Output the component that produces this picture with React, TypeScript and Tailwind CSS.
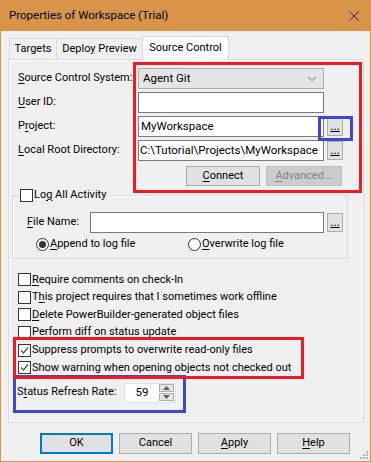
import { ChevronDown, X } from "lucide-react";
import type { ReactNode } from "react";

const font = "font-['Segoe_UI',Roboto,sans-serif]";

function U({ children }: { children: ReactNode }) {
  return <span className="underline underline-offset-2">{children}</span>;
}

function Check({ checked }: { checked?: boolean }) {
  return (
    <div className="flex h-[13px] w-[13px] shrink-0 items-center justify-center border border-[#333] bg-white">
      {checked && (
        <svg width="11" height="11" viewBox="0 0 11 11">
          <polyline points="2,5.5 4.5,8 9,2.5" fill="none" stroke="#555" strokeWidth="1.3" />
        </svg>
      )}
    </div>
  );
}

function Radio({ checked }: { checked?: boolean }) {
  return (
    <div className="flex h-[13px] w-[13px] shrink-0 items-center justify-center rounded-full border border-[#333] bg-white">
      {checked && <div className="h-[7px] w-[7px] rounded-full bg-[#333]" />}
    </div>
  );
}

function Dots() {
  return (
    <button className="ml-[3px] flex h-[19px] w-[16px] items-end justify-center border border-[#adadad] bg-[#e1e1e1] pb-[3px] text-[12px] leading-none">
      <span className="underline">...</span>
    </button>
  );
}

function Btn({ children, primary }: { children: ReactNode; primary?: boolean }) {
  return (
    <button
      className={
        primary
          ? "h-[21px] w-[73px] border-2 border-[#0078d7] bg-[#e1e1e1]"
          : "h-[21px] w-[73px] border border-[#adadad] bg-[#e1e1e1]"
      }
    >
      {children}
    </button>
  );
}

function Row({ label, children }: { label: ReactNode; children: ReactNode }) {
  return (
    <div className="flex h-[21px] items-center">
      <div className="w-[129px] pl-[9px]">{label}</div>
      {children}
    </div>
  );
}

function Option({ checked, children }: { checked?: boolean; children: ReactNode }) {
  return (
    <div className="flex h-[17.6px] items-center gap-[1px] pl-[9px]">
      <Check checked={checked} />
      <span>{children}</span>
    </div>
  );
}

export default function App() {
  return (
    <div className={`relative flex h-[462px] w-[371px] flex-col whitespace-nowrap border border-t-0 border-[#d8954a] bg-[#f0f0f0] text-[11px] text-black ${font}`}>
      <div className="-mx-px flex h-[31px] items-center justify-between bg-[#d8954a] pl-[9px] pr-[8px]">
        <span className="text-[11.5px]">Properties of Workspace (Trial)</span>
        <X size={18} strokeWidth={1} />
      </div>

      <div className="px-[7px] pt-[5px]">
        <div className="flex h-[23px] items-end pl-[1px]">
          <div className="flex h-[21px] w-[48px] items-center justify-center border border-b-0 border-[#d9d9d9]">Targets</div>
          <div className="flex h-[21px] w-[86px] items-center justify-center border border-b-0 border-l-0 border-[#d9d9d9]">Deploy Preview</div>
          <div className="relative z-10 -mb-px -ml-px flex h-[24px] w-[87px] items-center justify-center border border-b-0 border-[#d9d9d9] bg-white">
            Source Control
          </div>
        </div>

        <div className="h-[364px] w-[356px] border border-[#d9d9d9] shadow-[inset_1px_1px_0_#fff,inset_-1px_-1px_0_#fff]">
          <div className="flex flex-col gap-[3px] pt-[8px]">
            <Row label={<><U>S</U>ource Control System:</>}>
              <div className="flex h-[21px] w-[186px] items-center justify-between border border-[#adadad] bg-[#e5e5e5] pl-[4px] pr-[4px] text-[11.5px]">
                <span>Agent Git</span>
                <ChevronDown size={14} strokeWidth={1.3} className="text-[#444]" />
              </div>
            </Row>
            <Row label={<><U>U</U>ser ID:</>}>
              <div className="h-[21px] w-[186px] border border-[#7a7a7a] bg-white" />
            </Row>
            <Row label={<>P<U>r</U>oject:</>}>
              <div className="flex h-[21px] w-[186px] items-center border border-[#7a7a7a] bg-white pl-[2px] text-[11.5px]">MyWorkspace</div>
              <Dots />
            </Row>
            <Row label={<><U>L</U>ocal Root Directory:</>}>
              <div className="flex h-[21px] w-[186px] items-center overflow-hidden border border-[#7a7a7a] bg-white pl-[1px] text-[11.5px]">C:\Tutorial\Projects\MyWorkspace</div>
              <Dots />
            </Row>
          </div>

          <div className="mt-[5px] flex gap-[6px] pl-[177px]">
            <button className="h-[20px] w-[74px] border border-[#adadad] bg-[#e1e1e1]">
              <U>C</U>onnect
            </button>
            <button className="h-[20px] w-[76px] border border-[#bfbfbf] bg-[#cccccc] text-[#838383]">
              <U>A</U>dvanced...
            </button>
          </div>

          <div className="mt-[3px] ml-[3px] w-[336px]">
            <div className="relative z-10 flex h-[12px] items-center pl-[8px]">
              <div className="flex items-center gap-[1px] bg-[#f0f0f0] pr-[4px]">
                <Check />
                <span>Lo<U>g</U> All Activity</span>
              </div>
            </div>
            <div className="-mt-[6px] h-[64px] border border-[#dcdcdc] shadow-[inset_1px_1px_0_#fff]">
              <div className="mt-[16px] flex h-[21px] items-center">
                <span className="w-[77px] pl-[14px]"><U>F</U>ile Name:</span>
                <div className="h-[21px] w-[234px] border border-[#7a7a7a] bg-white" />
                <Dots />
              </div>
              <div className="mt-[3px] flex h-[17px] items-center pl-[23px]">
                <Radio checked />
                <span className="w-[139px] pl-[1px]"><U>A</U>ppend to log file</span>
                <Radio />
                <span className="pl-[1px]"><U>O</U>verwrite log file</span>
              </div>
            </div>
          </div>

          <div className="mt-[12px]">
            <Option><U>R</U>equire comments on check-In</Option>
            <Option>T<U>h</U>is project requires that I sometimes work offline</Option>
            <Option><U>D</U>elete PowerBuilder-generated object files</Option>
            <Option><U>P</U>erform diff on status update</Option>
            <Option checked>Suppress prompts to overwrite read-only files</Option>
            <Option checked>Show warning when opening objects not checked out</Option>
          </div>

          <div className="mt-[6px] flex h-[20px] items-center pl-[8px]">
            <span className="w-[107px]">S<U>t</U>atus Refresh Rate:</span>
            <div className="flex h-[20px] w-[52px] items-center border border-[#e3e3e3] bg-white">
              <span className="w-[34px] text-center text-[11.5px]">59</span>
              <div className="flex flex-col gap-px">
                <div className="flex h-[8px] w-[15px] items-center justify-center border border-[#adadad] bg-[#e5e5e5]">
                  <svg width="7" height="4" viewBox="0 0 7 4"><polygon points="0,4 7,4 3.5,0" fill="#606060" /></svg>
                </div>
                <div className="flex h-[8px] w-[15px] items-center justify-center border border-[#adadad] bg-[#e5e5e5]">
                  <svg width="7" height="4" viewBox="0 0 7 4"><polygon points="0,0 7,0 3.5,4" fill="#606060" /></svg>
                </div>
              </div>
            </div>
          </div>
        </div>
      </div>

      <div className="mt-[10px] flex gap-[6px] pl-[39px]">
        <Btn primary>OK</Btn>
        <Btn>Cancel</Btn>
        <Btn><U>A</U>pply</Btn>
        <Btn><U>H</U>elp</Btn>
      </div>

      <svg className="absolute right-[2px] bottom-[2px]" width="10" height="10" viewBox="0 0 10 10">
        {[[8, 0], [8, 3], [5, 3], [8, 6], [5, 6], [2, 6]].map(([x, y]) => (
          <rect key={`${x}-${y}`} x={x} y={y + 2} width="2" height="2" fill="#b4b4b4" />
        ))}
      </svg>

      {/* annotation boxes drawn over the dialog */}
      <div className="pointer-events-none absolute left-[132px] top-[62px] h-[131px] w-[229px] border-[3px] border-[#ed1c24]" />
      <div className="pointer-events-none absolute left-[317px] top-[116px] h-[25px] w-[35px] border-[3px] border-[#3f48cc]" />
      <div className="pointer-events-none absolute left-[12px] top-[375px] h-[38px] w-[173px] border-[3px] border-[#3f48cc]" />
      <div className="pointer-events-none absolute left-[12px] top-[337px] h-[42px] w-[291px] border-[3px] border-[#ed1c24]" />
    </div>
  );
}
